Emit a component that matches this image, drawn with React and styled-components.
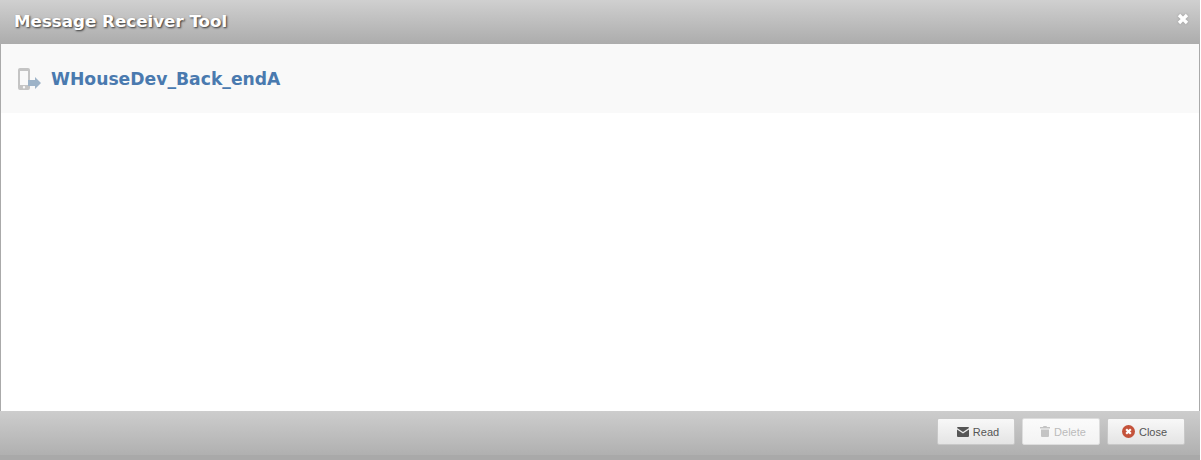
import React from "react";
import styled, { createGlobalStyle } from "styled-components";

const GlobalStyle = createGlobalStyle`
  html, body {
    margin: 0;
    padding: 0;
    background: #fff;
  }
`;

const Dialog = styled.div`
  width: 1200px;
  height: 460px;
  display: flex;
  flex-direction: column;
  overflow: hidden;
`;

const Header = styled.div`
  height: 44px;
  flex: none;
  display: flex;
  align-items: center;
  justify-content: space-between;
  padding: 0 11px 0 14px;
  background: linear-gradient(to bottom, #d0d0d0, #acacac);
`;

const Title = styled.div`
  margin-bottom: 2px;
  font-family: "DejaVu Sans", Verdana, sans-serif;
  font-size: 16.7px;
  font-weight: bold;
  color: #fff;
  text-shadow: 1px 1px 2px #333;
`;

const CloseX = styled.span`
  display: flex;
  color: #fff;
  filter: drop-shadow(0 0 1px #999);
  margin-top: -6px;
`;

const Body = styled.div`
  flex: 1;
  background: #fff;
  border-left: 1px solid #aaa;
  border-right: 1px solid #aaa;
`;

const Banner = styled.div`
  height: 69px;
  background: #f9f9f9;
  display: flex;
  align-items: center;
  gap: 10px;
  padding-left: 16px;
`;

const Name = styled.h2`
  margin: 0;
  font-family: "DejaVu Sans", Verdana, sans-serif;
  font-size: 17.2px;
  font-weight: bold;
  color: #4a7aaf;
`;

const Footer = styled.div`
  height: 49px;
  flex: none;
  display: flex;
  justify-content: flex-end;
  gap: 7px;
  padding: 7px 15px 0 0;
  box-sizing: border-box;
  background: linear-gradient(to bottom, #cdcdcd, #b0b0b0 44px, #a9a9a9 44px);
`;

const Button = styled.button`
  width: 78px;
  height: 27px;
  padding: ${(p) => p.$pad};
  display: flex;
  align-items: center;
  justify-content: center;
  gap: 4px;
  border: 1px solid #c8c8c8;
  border-radius: 2px;
  background: linear-gradient(to bottom, #f8f8f8, #e4e4e4);
  font-family: "Liberation Sans", Arial, sans-serif;
  font-size: 11px;
  color: #555;

  &:disabled {
    color: #bbb;
    background: linear-gradient(to bottom, #fbfbfb, #f3f3f3);
    border-color: #ddd;
  }
`;

const PhoneIcon = () => (
  <svg width="24" height="22" viewBox="0 0 24 22">
    <path
      fill="#c4c4c4"
      fillRule="evenodd"
      d="M3 0h8a2 2 0 0 1 2 2v18a2 2 0 0 1-2 2H3a2 2 0 0 1-2-2V2a2 2 0 0 1 2-2zM3 3v14h8V3zM7 18a1.2 1.2 0 1 0 0 2.4 1.2 1.2 0 0 0 0-2.4z"
    />
    <path fill="#9db3c8" d="M11 12h7V9l6 6-6 6v-3h-7z" />
  </svg>
);

const CrossIcon = () => (
  <svg width="12" height="12" viewBox="0 0 12 12">
    <path d="M2 2l8 8M10 2l-8 8" stroke="currentColor" strokeWidth="3.4" />
  </svg>
);

const MailIcon = () => (
  <svg width="12" height="10" viewBox="0 0 12 10">
    <path fill="#555" d="M0 1a1 1 0 0 1 1-1h10a1 1 0 0 1 1 1L6 5zM0 2.6l6 4 6-4V9a1 1 0 0 1-1 1H1a1 1 0 0 1-1-1z" />
  </svg>
);

const TrashIcon = () => (
  <svg width="10" height="11" viewBox="0 0 10 11">
    <path fill="#c4c4c4" d="M3.5 0h3l.5 1h3v1.5H0V1h3zM1 3.5h8V10a1 1 0 0 1-1 1H2a1 1 0 0 1-1-1z" />
  </svg>
);

const CloseIcon = () => (
  <svg width="13" height="13" viewBox="0 0 13 13">
    <circle cx="6.5" cy="6.5" r="6.5" fill="#c4523a" />
    <path d="M4.2 4.2l4.6 4.6M8.8 4.2l-4.6 4.6" stroke="#fff" strokeWidth="2.2" />
  </svg>
);

export default function App() {
  return (
    <>
      <GlobalStyle />
      <Dialog>
        <Header>
          <Title>Message Receiver Tool</Title>
          <CloseX>
            <CrossIcon />
          </CloseX>
        </Header>
        <Body>
          <Banner>
            <PhoneIcon />
            <Name>WHouseDev_Back_endA</Name>
          </Banner>
        </Body>
        <Footer>
          <Button $pad="0 0 0 4px">
            <MailIcon />
            Read
          </Button>
          <Button disabled $pad="0 0 0 4px">
            <TrashIcon />
            Delete
          </Button>
          <Button $pad="0 3px 0 0">
            <CloseIcon />
            Close
          </Button>
        </Footer>
      </Dialog>
    </>
  );
}
